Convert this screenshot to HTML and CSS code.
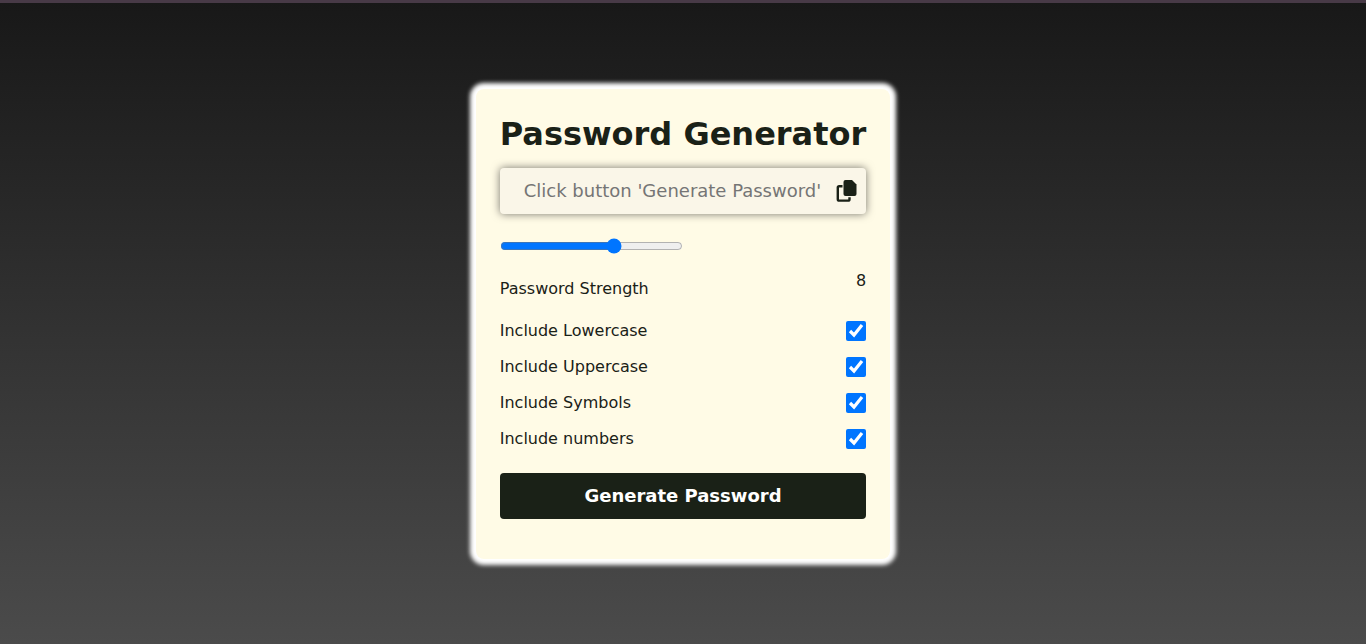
FILE: index.html
```html
<!DOCTYPE html>
<html lang="en">
<head>
<meta charset="utf-8">
<title>Password Generator</title>
<link rel="stylesheet" href="styles.css">
</head>
<body>
<main class="card">
  <h1 class="title">Password Generator</h1>
  <div class="field">
    <input class="password" type="text" aria-label="Generated password" placeholder="Click button 'Generate Password'" readonly>
    <button class="copy" type="button" aria-label="Copy password">
      <svg viewBox="0 0 20 22" aria-hidden="true">
        <path class="sheet" d="M9 0h6.500l4.500 4.500v9.500a2 2 0 0 1-2 2H9a2 2 0 0 1-2-2V2a2 2 0 0 1 2-2z"/>
        <path class="outline" d="M6 6.200H2.700Q1.300 6.200 1.300 7.600V19.200Q1.300 20.600 2.700 20.600H11.500Q13 20.600 13 19.200V17.300"/>
      </svg>
    </button>
  </div>
  <input class="slider" id="strength" type="range" min="1" max="12" value="8">
  <div class="strength">
    <label class="strength-label" for="strength">Password Strength</label>
    <output for="strength">8</output>
  </div>
  <div class="option"><label for="lower">Include Lowercase</label><input class="check" id="lower" type="checkbox" checked></div>
  <div class="option"><label for="upper">Include Uppercase</label><input class="check" id="upper" type="checkbox" checked></div>
  <div class="option"><label for="symbols">Include Symbols</label><input class="check" id="symbols" type="checkbox" checked></div>
  <div class="option"><label for="numbers">Include numbers</label><input class="check" id="numbers" type="checkbox" checked></div>
  <button class="generate" type="button">Generate Password</button>
</main>
</body>
</html>
```
FILE: styles.css
```css
* {
  box-sizing: border-box;
  margin: 0;
  padding: 0;
}

body {
  min-height: 100vh;
  display: flex;
  align-items: center;
  justify-content: center;
  padding-top: 1px;
  border-top: 3px solid #483a47;
  background: linear-gradient(#181818, #4b4b4b);
  color: #1a2117;
  font: 16px/20px Verdana, "DejaVu Sans", sans-serif;
}

.card {
  padding: 24px 24px 40px;
  border-radius: 8px;
  background: #fffbe6;
  box-shadow: 0 0 4px 6px #fff;
}

.title {
  margin-bottom: 13px;
  font-size: 32px;
  line-height: 42px;
}

.field {
  display: flex;
  align-items: center;
  height: 46px;
  margin-bottom: 24px;
  padding: 0 9px 0 24px;
  border-radius: 4px;
  background: #faf6e8;
  box-shadow: 0 0 8px #77756c;
}

.password {
  flex: 1;
  min-width: 0;
  border: 0;
  outline: 0;
  background: transparent;
  color: #1a2117;
  font: 18px/24px Verdana, "DejaVu Sans", sans-serif;
}

.copy {
  display: flex;
  border: 0;
  background: none;
}

.copy svg {
  width: 21px;
  height: 22px;
}

.sheet {
  fill: #1a2117;
}

.outline {
  fill: none;
  stroke: #1a2117;
  stroke-width: 2.4;
}

.slider {
  display: block;
  width: 50%;
  height: 16px;
  margin-bottom: 16px;
  accent-color: #0075ff;
}

.strength {
  display: flex;
  justify-content: space-between;
  margin-bottom: 21px;
  line-height: 22px;
}

.strength-label {
  padding-top: 8px;
}

.option {
  display: flex;
  align-items: center;
  justify-content: space-between;
  margin-bottom: 16px;
}

.check {
  width: 20px;
  height: 20px;
  accent-color: #0075ff;
}

.generate {
  display: block;
  width: 100%;
  height: 46px;
  margin-top: 24px;
  border: 0;
  border-radius: 4px;
  background: #1a2117;
  color: #fff;
  font: bold 18px/24px Verdana, "DejaVu Sans", sans-serif;
}
```
